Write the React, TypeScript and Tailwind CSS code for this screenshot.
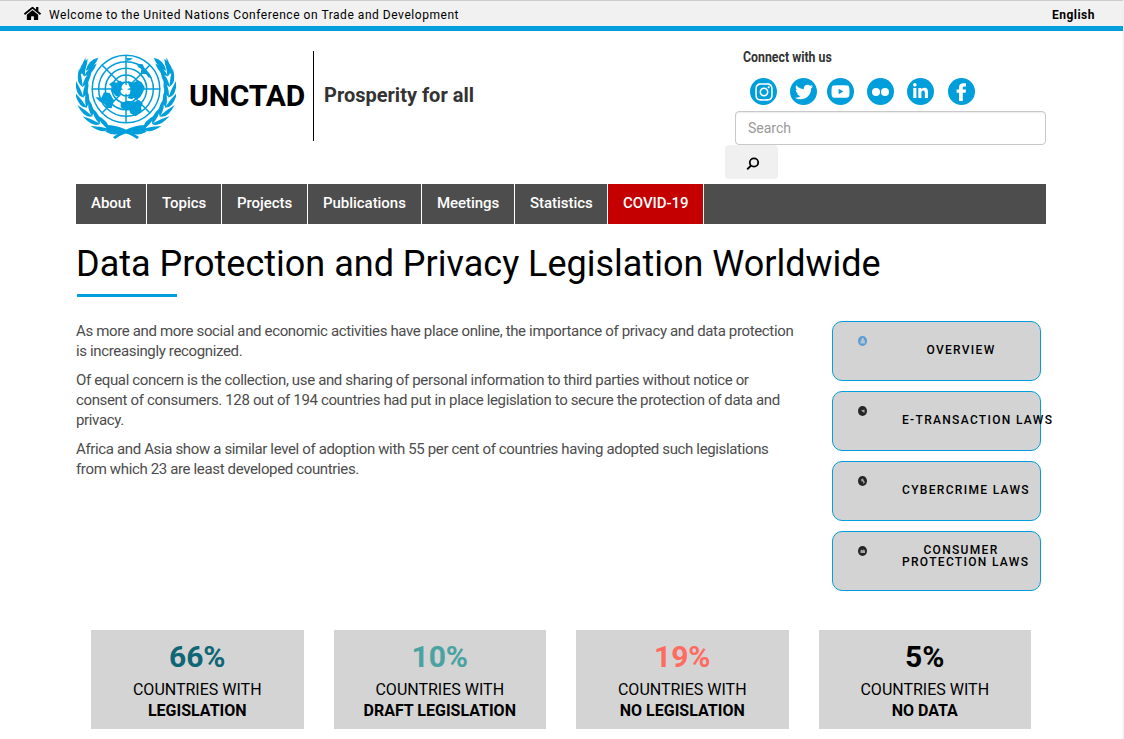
import React from "react";
import { FaHome, FaTwitter, FaYoutube, FaLinkedinIn, FaInstagram } from "react-icons/fa";

const BLUE = "#009edb";

function Branch() {
  const angles = [68, 82, 96, 110, 124, 138, 152];
  return (
    <g>
      {angles.map((a) => (
        <g key={a} transform={`rotate(${-a}) translate(0,-131)`}>
          <path d="M-12 2Q-6 -22 42 -17Q18 -5 -12 2Z" />
          <path d="M-12 0Q0 22 38 21Q20 2 -12 0Z" />
        </g>
      ))}
      <path d="M-83 -94Q-114 -88 -121 -54Q-94 -64 -83 -94Z" />
      <path d="M-115 -91Q-142 -72 -141 -40Q-116 -56 -115 -91Z" />
      <path d="M-66 108Q-30 107 2 123Q24 133 39 144L33 150Q-2 127 -18 134Q-38 141 -62 128Q-50 122 -66 108Z" />
    </g>
  );
}

function Emblem() {
  return (
    <svg width="100" height="85" viewBox="18 18 300 255" className="block shrink-0">
      <g transform="translate(168,123)" fill={BLUE}>
        <g fill="none" stroke={BLUE} strokeWidth="4.5">
          <circle r="101.5" />
          <circle r="82" />
          <circle r="62" />
          <circle r="42" />
          <circle r="21" />
          <path d="M0 -102V102M-102 0H102M-72 -72L-16 -16M72 72L16 16M72 -72L16 -16M-72 72L-16 16" />
        </g>
        <path d="M-51 -14L-40 -22L-28 -19L-18 -25L-5 -18L-12 -10L-15 2L-18 12L-20 22L-30 22L-38 12L-46 6L-38 -3Z" />
        <path d="M6 -24L22 -19L36 -26L47 -20L56 -5L51 10L43 24L34 31L26 24L18 31L5 27L10 18L13 8L13 -4L8 -12Z" />
        <path d="M-92 24L-74 26L-66 10L-49 12L-41 26L-35 36L-40 45L-43 58L-57 56L-65 45L-80 37Z" />
        <path d="M-16 42L4 35L25 38L40 34L50 43L45 56L48 68L29 82L13 73L10 62L-7 62L-16 54Z" />
        <path d="M33 -76L50 -74L56 -61L67 -49L77 -33L67 -35L60 -45L44 -46L46 -60L36 -66ZM1 -93L20 -92L13 -86L3 -85Z" />
        <path d="M-8 -14L3 -11L9 -3L4 2L9 10L0 16L-9 10L-4 5L-12 0Z" fill="white" />
        <Branch />
        <g transform="scale(-1,1)">
          <Branch />
        </g>
      </g>
    </svg>
  );
}

function Flickr() {
  return (
    <svg width="19" height="10" viewBox="0 0 19 10" fill="currentColor">
      <circle cx="5" cy="5" r="4" />
      <circle cx="14" cy="5" r="4" />
    </svg>
  );
}

function Facebook() {
  return (
    <svg width="11" height="18" viewBox="0 0 11 18" fill="currentColor">
      <path d="M3 18V9.8H0.6V6.4H3V4.4C3 1.6 4.7 0.3 7.2 0.3H10V3.5H8.3C7.1 3.5 6.8 4 6.8 5V6.4H10L9.6 9.8H6.8V18Z" />
    </svg>
  );
}

const socials = [
  { name: "Instagram", icon: <FaInstagram size={20} />, gap: "" },
  { name: "Twitter", icon: <FaTwitter size={18} />, gap: "ml-[13px]" },
  { name: "YouTube", icon: <FaYoutube size={19} />, gap: "ml-[10px]" },
  { name: "Flickr", icon: <Flickr />, gap: "ml-[13px]" },
  { name: "LinkedIn", icon: <FaLinkedinIn size={17} />, gap: "ml-[13px]" },
  { name: "Facebook", icon: <Facebook />, gap: "ml-[14px]" },
];

const nav = [
  { label: "About", cls: "w-[71px]" },
  { label: "Topics", cls: "w-[75px]" },
  { label: "Projects", cls: "w-[86px]" },
  { label: "Publications", cls: "w-[114px]" },
  { label: "Meetings", cls: "w-[93px]" },
  { label: "Statistics", cls: "w-[93px]" },
  { label: "COVID-19", cls: "w-[96px] bg-[#c50000]" },
];

const laws = [
  { lines: ["OVERVIEW"], color: "#5b9bd5", glyph: "M3.5 4.2V3a1.2 1.2 0 0 1 2.4 0v1.2h1v3.4h-4.4V4.2z", pad: "pt-[22px]" },
  { lines: ["E-TRANSACTION LAWS"], color: "#262626", glyph: "M3 4.5L6.5 3.5V7L5 6z", pad: "pt-[22px]" },
  { lines: ["CYBERCRIME LAWS"], color: "#262626", glyph: "M3 3.5L5 2.5L6 5L7 6L5.5 8L5 5.5L3.5 5.5z", pad: "pt-[22px]" },
  { lines: ["CONSUMER", "PROTECTION LAWS"], color: "#262626", glyph: "M2.5 7V4.5L3.5 3.5L4.5 4.5L5.5 3.5L7 4.5V7z", pad: "pt-[12px]" },
];

const stats = [
  { pct: "66%", what: "LEGISLATION", cls: "text-[#0f6674]" },
  { pct: "10%", what: "DRAFT LEGISLATION", cls: "text-[#4aa3a2]" },
  { pct: "19%", what: "NO LEGISLATION", cls: "text-[#ff6b61]" },
  { pct: "5%", what: "NO DATA", cls: "text-black" },
];

export default function App() {
  return (
    <div className="h-[739px] w-[1124px] overflow-hidden border-r border-[#eeeeee] bg-white font-['Roboto',sans-serif] text-black">
      <div className="flex h-[31px] items-center border-t border-b-[5px] border-t-[#cccccc] border-b-[#009edb] bg-[#f1f1f1] pr-7 pl-6 text-[12px]">
        <FaHome size={17} />
        <span className="ml-2 pt-[2px] tracking-[0.54px]">Welcome to the United Nations Conference on Trade and Development</span>
        <span className="ml-auto pt-[2px] font-bold tracking-[0.5px]">English</span>
      </div>

      <div className="ml-[76px] w-[970px]">
        <header className="flex h-[153px]">
          <div className="mt-5 flex h-[90px] w-[649px]">
            <div className="pt-[3px]"><Emblem /></div>
            <div className="ml-[13px] w-[125px] border-r border-black pt-[25px] text-[30px] leading-[40px] font-bold tracking-[-0.1px]">UNCTAD</div>
            <div className="ml-[10px] pt-[29px] text-[20px] leading-[30px] font-bold text-[#333333]">Prosperity for all</div>
          </div>
          <div className="w-[321px] pt-[16px]">
            <div className="ml-[18px] h-5 w-[110px] origin-left scale-x-[0.88] text-[14px] leading-5 font-bold whitespace-nowrap text-[#333333]">Connect with us</div>
            <div className="mt-[11px] ml-[25px] flex text-white">
              {socials.map((s) => (
                <a key={s.name} aria-label={s.name} className={`flex size-[27px] items-center justify-center rounded-full bg-[#009edb] ${s.gap}`}>{s.icon}</a>
              ))}
            </div>
            <div className="mt-[6px] ml-[10px] flex h-[34px] items-center rounded border border-[#c8c8c8] px-3 text-[14px] text-[#999999] shadow-[inset_0_1px_1px_rgba(0,0,0,0.075)]">Search</div>
            <div className="flex h-[34px] w-[53px] items-center justify-center rounded bg-[#f0f0f0]">
              <svg width="14" height="14" viewBox="0 0 14 14" fill="none" stroke="black" strokeWidth="1.8" className="mt-[3px] ml-[2px]">
                <circle cx="8" cy="5.5" r="4.2" />
                <path d="M5 8.5L1.2 12.3" />
              </svg>
            </div>
          </div>
        </header>

        <nav className="flex h-10 bg-[#4d4d4d]">
          {nav.map((n) => (
            <a key={n.label} className={`border-r border-white pt-2 pl-[15px] text-[15px] leading-[22px] font-medium tracking-[-0.04px] whitespace-nowrap text-white ${n.cls}`}>{n.label}</a>
          ))}
        </nav>

        <h1 className="mt-[20px] h-[49px] text-[36px] leading-[40px] whitespace-nowrap">Data Protection and Privacy Legislation Worldwide</h1>
        <div className="mt-[1px] ml-px h-[3px] w-[100px] bg-[#009edb]" />

        <div className="mt-6 flex h-[309px] justify-between">
          <div className="text-[15px] leading-5 tracking-[-0.355px] whitespace-nowrap text-[#4c4c4c]">
            <p>As more and more social and economic activities have place online, the importance of privacy and data protection<br />is increasingly recognized.</p>
            <p className="mt-[9px]">Of equal concern is the collection, use and sharing of personal information to third parties without notice or<br />consent of consumers. 128 out of 194 countries had put in place legislation to secure the protection of data and<br />privacy.</p>
            <p className="mt-[9px]">Africa and Asia show a similar level of adoption with 55 per cent of countries having adopted such legislations<br />from which 23 are least developed countries.</p>
          </div>
          <div className="mr-[5px] flex w-[209px] flex-col gap-[10px]">
            {laws.map((l) => (
              <a key={l.lines[0]} className="flex h-[60px] shrink-0 rounded-[10px] border border-[#009edb] bg-[#d3d3d3]">
                <svg width="9" height="10" viewBox="0 0 9 10" className="mt-[14px] ml-[25px] shrink-0">
                  <ellipse cx="4.5" cy="5" rx="4.5" ry="5" fill={l.color} />
                  <path d={l.glyph} fill="#d3d3d3" fillOpacity="0.75" />
                </svg>
                <span className={`ml-[35px] w-[118px] text-center text-[12px] leading-[12px] font-medium tracking-[1.32px] whitespace-nowrap ${l.pad}`}>
                  {l.lines.map((t) => <span key={t} className="block">{t}</span>)}
                </span>
              </a>
            ))}
          </div>
        </div>

        <div className="grid h-[99px] grid-cols-4 gap-[30px] px-[15px] text-center text-[16px] leading-[21px]">
          {stats.map((s) => (
            <div key={s.pct} className="bg-[#d4d4d4] pt-[9px]">
              <div className={`h-[40px] text-[30px] leading-[36px] font-bold ${s.cls}`}>{s.pct}</div>
              <div>COUNTRIES WITH</div>
              <div className="font-bold">{s.what}</div>
            </div>
          ))}
        </div>
      </div>
    </div>
  );
}
